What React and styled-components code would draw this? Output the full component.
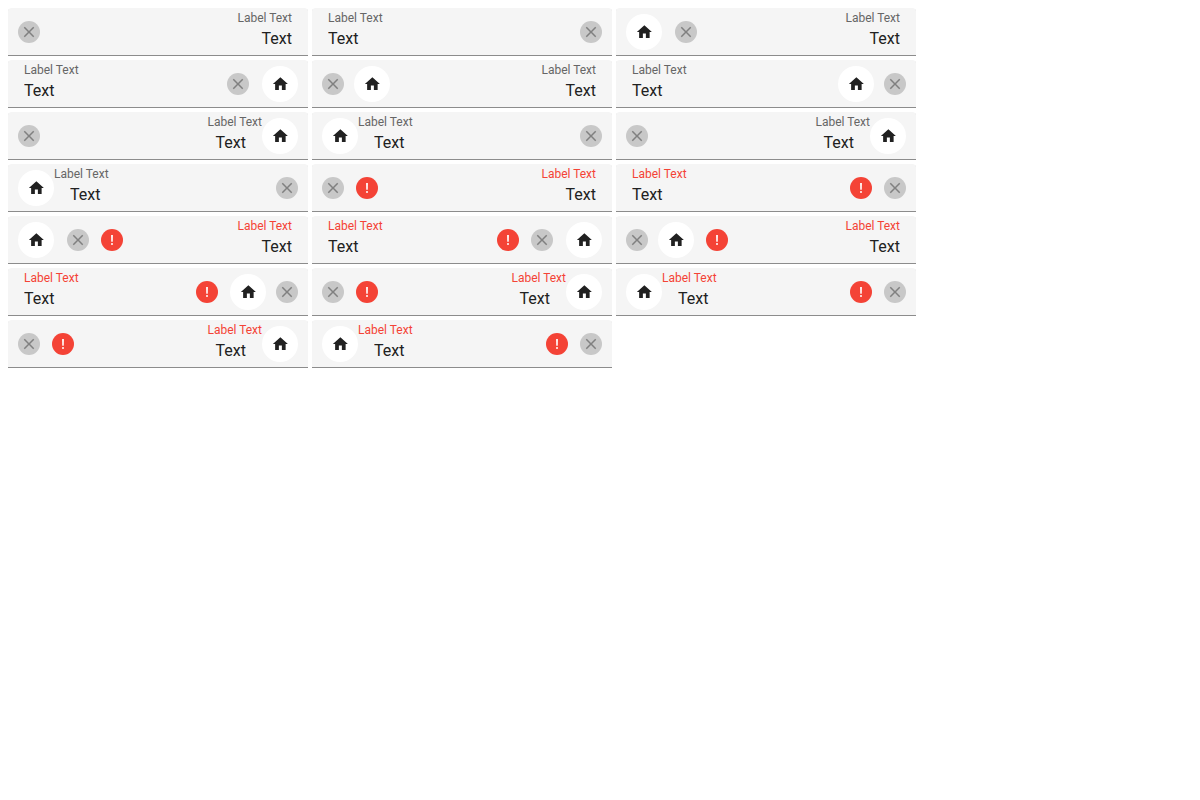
import React, { useId, useState } from "react";
import styled, { createGlobalStyle, css } from "styled-components";

const GlobalStyle = createGlobalStyle`
  body {
    margin: 8px;
    background: #fff;
    font-family: Roboto, "Liberation Sans", sans-serif;
  }
`;

const FieldGrid = styled.main`
  display: grid;
  grid-template-columns: repeat(auto-fill, minmax(240px, 1fr));
  gap: 4px;
  max-width: 908px;

  @media (min-width: 924px) {
    grid-template-columns: repeat(3, 1fr);
  }
`;

const Field = styled.div`
  display: flex;
  align-items: center;
  box-sizing: border-box;
  min-height: 48px;
  overflow: hidden;
  border-radius: 4px 4px 0 0;
  background: #f5f5f5;
  box-shadow: inset 0 -1px #8c8c8c;
  padding-inline: ${(p) => (p.$leading ? "10px" : "0")} 10px;
`;

const TextColumn = styled.div`
  display: flex;
  flex: 1;
  flex-direction: column;
  align-self: stretch;
  gap: 3px;
  min-width: 0;
  padding-top: 2px;
`;

const Label = styled.label`
  padding-inline-start: ${(p) => (p.$leading ? "0" : "16px")};
  color: ${(p) => (p.$invalid ? "#f44336" : "#666")};
  font-size: 12px;
  line-height: 16px;
`;

const Input = styled.input`
  box-sizing: border-box;
  width: 100%;
  height: 20px;
  border: 0;
  outline: 0;
  padding: 0 16px;
  background: transparent;
  color: #212121;
  font-family: inherit;
  font-size: 16px;
  line-height: 20px;
`;

const round = css`
  display: flex;
  flex: none;
  align-items: center;
  justify-content: center;
  border: 0;
  border-radius: 50%;
  padding: 0;
`;

const HomeButton = styled.button`
  ${round}
  width: 36px;
  height: 36px;
  background: #fff;
  color: #212121;
  cursor: pointer;
`;

const ClearButton = styled.button`
  ${round}
  width: 22px;
  height: 22px;
  margin-inline: ${(p) => (p.$last ? "10px 0" : "12px 13px")};
  background: #c8c8c8;
  color: #808080;
  cursor: pointer;
`;

const ErrorBadge = styled.span`
  ${round}
  width: 22px;
  height: 22px;
  margin-inline-end: ${(p) => (p.$beforeClear ? "2px" : p.$beforeHome ? "12px" : "0")};
  background: #f44336;
  color: #fff;
`;

const Icon = styled.svg.attrs({ "aria-hidden": true })`
  display: block;
  width: ${(p) => p.$size}px;
  height: ${(p) => p.$size}px;
  fill: currentColor;
`;

function Home() {
  return (
    <HomeButton type="button" aria-label="Home">
      <Icon $size={18} viewBox="-0.5 0 24 24">
        <path d="M10 20v-6h4v6h5v-8h3L12 3 2 12h3v8z" />
      </Icon>
    </HomeButton>
  );
}

/* home: "leading" before the text, "outer" after the clear button,
   "inner" between the text and the clear button. */
function TextField({ dir, home, invalid }) {
  const id = useId();
  const [value, setValue] = useState("Text");
  const leading = home === "leading";
  const outer = home === "outer";
  const inner = home === "inner";
  return (
    <Field dir={dir} $leading={leading}>
      {leading && <Home />}
      <TextColumn>
        <Label htmlFor={id} $leading={leading} $invalid={invalid}>
          Label Text
        </Label>
        <Input
          id={id}
          type="text"
          value={value}
          aria-invalid={invalid}
          onChange={(e) => setValue(e.target.value)}
        />
      </TextColumn>
      {invalid && (
        <ErrorBadge role="img" aria-label="Error" $beforeHome={inner} $beforeClear={!inner && !outer}>
          <Icon $size={22} viewBox="0 0 22 22">
            <path d="M10.1 6.1h1.8l-.15 6.6h-1.5z" />
            <circle cx="11" cy="15" r="1" />
          </Icon>
        </ErrorBadge>
      )}
      {inner && <Home />}
      <ClearButton type="button" aria-label="Clear" $last={!outer} onClick={() => setValue("")}>
        <Icon $size={18} viewBox="0 0 24 24">
          <path d="M19 6.41L17.59 5 12 10.59 6.41 5 5 6.41 10.59 12 5 17.59 6.41 19 12 13.41 17.59 19 19 17.59 13.41 12z" />
        </Icon>
      </ClearButton>
      {outer && <Home />}
    </Field>
  );
}

const placements = ["none", "outer", "inner", "leading", "leading"];

const fields = [false, true].flatMap((invalid) =>
  placements.flatMap((home) => [
    { dir: "rtl", home, invalid },
    { dir: "ltr", home, invalid },
  ])
);

export default function App() {
  return (
    <>
      <GlobalStyle />
      <FieldGrid>
        {fields.map((field, index) => (
          <TextField key={index} {...field} />
        ))}
      </FieldGrid>
    </>
  );
}
